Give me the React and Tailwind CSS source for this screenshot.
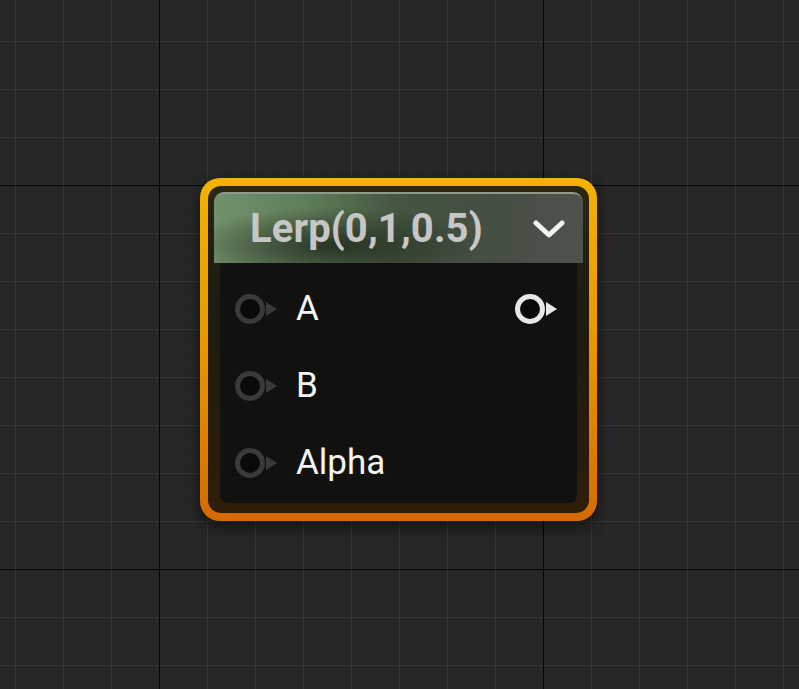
import React from "react";

function Pin({ active }) {
  const ring = active ? "#e8e8e8" : "#3a3a3a";
  return (
    <svg width="46" height="34" viewBox="0 0 46 34" style={{ filter: "blur(0.7px)" }}>
      <circle cx="16" cy="17" r="12.5" fill="#0a0a0a" stroke={ring} strokeWidth="5" />
      <polygon points="32,10 32,24 43,17" fill={ring} />
    </svg>
  );
}

function Row({ label, output }) {
  return (
    <div className="flex h-[77px] items-center pl-[14px] pr-[17px]">
      <Pin />
      <span className="ml-[16px] text-[35px] leading-none text-[#f4f4f4]">{label}</span>
      <div className="flex-1" />
      {output && <Pin active />}
    </div>
  );
}

export default function App() {
  return (
    <div
      className="relative h-[689px] w-[799px] overflow-hidden bg-[#262626] font-['Roboto',sans-serif] [background-image:linear-gradient(to_right,#050505_0,#050505_1px,transparent_1px),linear-gradient(to_bottom,#050505_0,#050505_1px,transparent_1px),linear-gradient(to_right,#343434_0,#343434_1px,transparent_1px),linear-gradient(to_bottom,#343434_0,#343434_1px,transparent_1px),linear-gradient(to_right,#292929_0,#292929_1px,transparent_1px),linear-gradient(to_bottom,#292929_0,#292929_1px,transparent_1px)] [background-size:384px_384px,384px_384px,48px_48px,48px_48px,16px_16px,16px_16px] [background-position:159px_185px,159px_185px,15px_41px,15px_41px,15px_9px,15px_9px]"
    >
      <div className="absolute left-[200px] top-[178px] w-[397px] rounded-[20px] bg-[linear-gradient(to_bottom,#f3b200,#e99600_50%,#d46a00)] p-[8px] shadow-[0_6px_14px_rgba(0,0,0,0.55)]">
        <div className="rounded-[13px] bg-[linear-gradient(to_bottom,#2a2714,#1e1b10_35%,#2a1c0b_85%,#2f1e0a)] px-[6px] pb-[10px] pt-[6px]">
          <div className="relative flex h-[71px] items-center rounded-t-[10px] border-t-[2px] border-[#8e9b88] pl-[36px] pr-[18px] [background-image:radial-gradient(ellipse_150px_38px_at_33%_75%,rgba(34,44,31,0.9),rgba(34,44,31,0)),linear-gradient(to_right,#73916c,#5f7d58_25%,#445540_50%,#454e43_75%,#4e524c)]">
            <span className="text-[40px] font-bold leading-none tracking-[0.1px] text-[#c6c6c6]">Lerp(0,1,0.5)</span>
            <div className="flex-1" />
            <svg width="32" height="20" viewBox="0 0 32 20">
              <polyline points="3,4 16,16 29,4" fill="none" stroke="#f2f2f2" strokeWidth="5" strokeLinecap="round" strokeLinejoin="round" />
            </svg>
          </div>
          <div className="mx-[6px] rounded-b-[8px] bg-[#111210] pb-[2px] pt-[7px]">
            <Row label="A" output />
            <Row label="B" />
            <Row label="Alpha" />
          </div>
        </div>
      </div>
    </div>
  );
}
